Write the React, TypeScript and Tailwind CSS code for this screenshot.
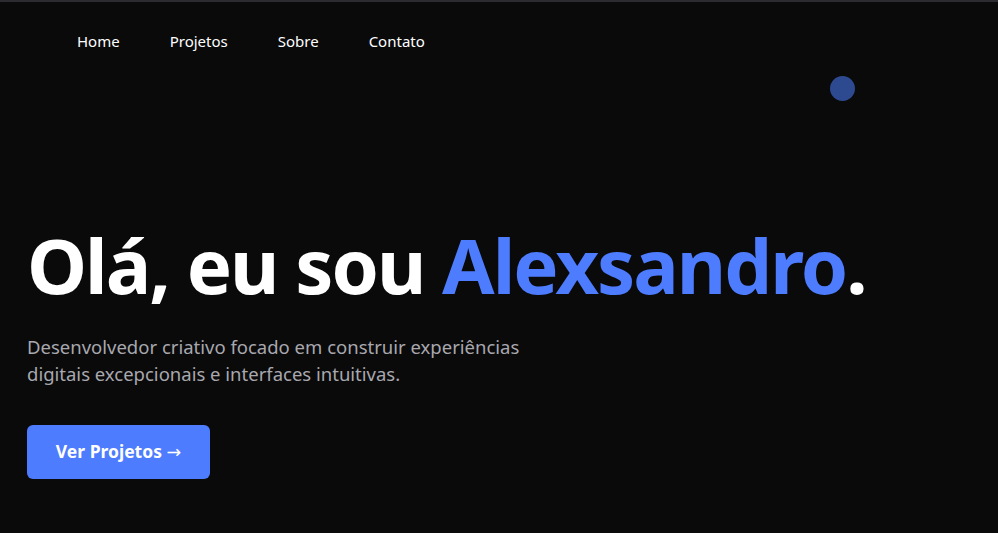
export default function App() {
  const links = ["Home", "Projetos", "Sobre", "Contato"];

  return (
    <div className="min-h-[533px] bg-[#0a0a0b] border-t-2 border-[#2c2c30] font-['Noto_Sans',sans-serif] text-white">
      {/* Nav */}
      <nav className="flex gap-[50px] pl-[77px] pt-[28px] text-[15px]">
        {links.map((l) => (
          <a key={l} className="text-white">
            {l}
          </a>
        ))}
      </nav>

      {/* Hero */}
      <section className="relative px-[27px] pt-[174px]">
        <div className="absolute left-[830px] top-[23px] w-[25px] h-[25px] rounded-full bg-[#2d4a91]" />
        <h1 className="text-[76px] font-bold leading-none tracking-[-2px]">
          Olá, eu sou <span className="text-[#4d7cfe]">Alexsandro</span>.
        </h1>
        <p className="mt-[30px] max-w-[505px] text-[18.5px] leading-[27px] text-[#a8a8ae]">
          Desenvolvedor criativo focado em construir experiências digitais excepcionais e interfaces intuitivas.
        </p>
        <button className="mt-[38px] h-[54px] w-[183px] rounded-md bg-[#4d7cfe] text-[17.5px] font-bold text-white">
          Ver Projetos <span className="font-['DejaVu_Sans'] font-normal">→</span>
        </button>
      </section>
    </div>
  );
}
